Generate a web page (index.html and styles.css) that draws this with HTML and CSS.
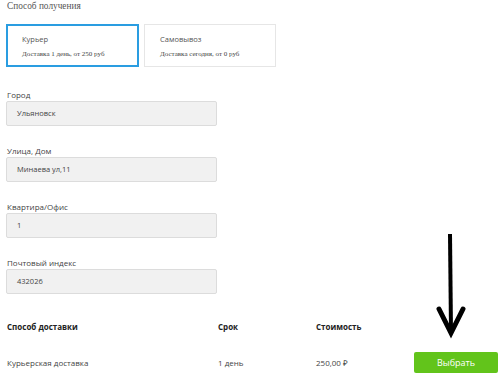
FILE: index.html
```html
<!DOCTYPE html>
<html lang="ru">
<head>
<meta charset="utf-8">
<link rel="stylesheet" href="styles.css">
</head>
<body>
<div class="page">
  <div class="title">Способ получения</div>
  <div class="cards">
    <div class="card active">
      <div class="card-name">Курьер</div>
      <div class="card-desc">Доставка 1 день, от 250 руб</div>
    </div>
    <div class="card">
      <div class="card-name">Самовывоз</div>
      <div class="card-desc">Доставка сегодня, от 0 руб</div>
    </div>
  </div>
  <div class="fields">
    <div class="field">
      <div class="label">Город</div>
      <div class="input">Ульяновск</div>
    </div>
    <div class="field">
      <div class="label">Улица, Дом</div>
      <div class="input">Минаева ул,11</div>
    </div>
    <div class="field">
      <div class="label">Квартира/Офис</div>
      <div class="input">1</div>
    </div>
    <div class="field">
      <div class="label">Почтовый индекс</div>
      <div class="input">432026</div>
    </div>
  </div>
  <div class="table">
    <div class="th">Способ доставки</div>
    <div class="th">Срок</div>
    <div class="th">Стоимость</div>
    <div class="th"></div>
    <div class="td">Курьерская доставка</div>
    <div class="td">1 день</div>
    <div class="td">250,00 ₽</div>
    <div class="td"><button class="btn">Выбрать</button></div>
  </div>
  <svg class="arrow" width="40" height="110" viewBox="0 0 40 110">
    <path d="M20 2 L21 100" stroke="#000" stroke-width="4" fill="none"/>
    <path d="M9 77 L21 101 L33 77" stroke="#000" stroke-width="5" fill="none" stroke-linejoin="miter" stroke-linecap="round"/>
  </svg>
</div>
</body>
</html>
```
FILE: styles.css
```css
* { box-sizing: border-box; }
html, body { margin: 0; padding: 0; background: #fff; }
body { width: 503px; height: 377px; overflow: hidden; font-family: "Open Sans", sans-serif; color: #444; }
.page { position: relative; padding: 0 6px; }
.title { font-family: "Liberation Serif", "Times New Roman", serif; font-size: 9.3px; color: #555; line-height: 12px; padding-left: 1px; }
.cards { display: flex; gap: 5px; margin-top: 12px; }
.card { width: 132px; height: 43px; border: 1px solid #e6e6e6; padding: 9px 0 0 15px; }
.card.active { width: 133px; border: 2px solid #2a9de1; padding: 8px 0 0 14px; }
.card-name { font-size: 7.5px; color: #555; line-height: 10px; }
.card-desc { font-family: "Liberation Serif", serif; font-size: 7px; color: #444; line-height: 10px; margin-top: 5px; }
.fields { margin-top: 23px; display: flex; flex-direction: column; gap: 20px; }
.field { display: flex; flex-direction: column; }
.label { font-size: 8px; line-height: 10px; color: #444; margin-bottom: 1px; padding-left: 1px; }
.input { width: 211px; height: 25px; background: #f1f1f1; border: 1px solid #dcdcdc; border-radius: 2px; font-size: 7.5px; color: #444; padding-left: 10px; line-height: 23px; }
.table { display: grid; grid-template-columns: 211px 98px 99px 84px; margin-top: 27px; align-items: center; }
.th { font-weight: 700; font-size: 8px; color: #222; line-height: 12px; padding-left: 1px; }
.td { font-size: 8px; color: #444; padding-left: 1px; height: 21px; margin-top: 19px; display: flex; align-items: center; }
.btn { width: 84px; height: 21px; background: #62c41b; border: none; border-radius: 2px; color: #fff; font-family: "Open Sans", sans-serif; font-size: 9px; padding: 0; margin-left: -1px; }
.arrow { position: absolute; left: 430px; top: 232px; }
```
